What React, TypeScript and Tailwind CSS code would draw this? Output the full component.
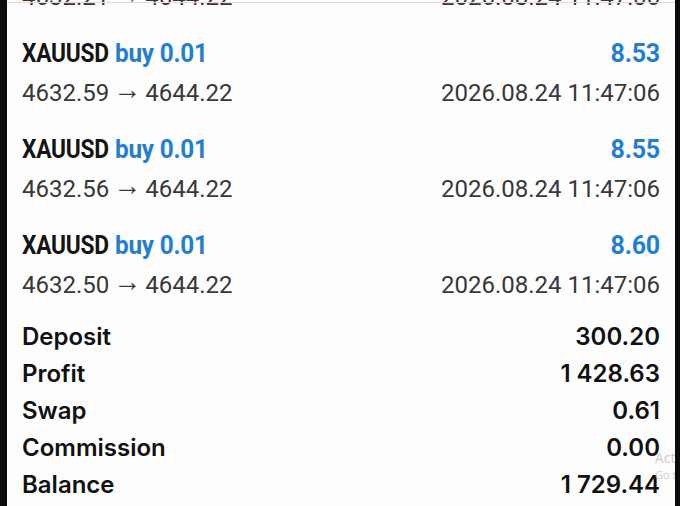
import React from "react";

const trades = [
  { open: "4632.21", close: "4644.22", profit: "8.51", time: "2026.08.24 11:47:06" },
  { open: "4632.59", close: "4644.22", profit: "8.53", time: "2026.08.24 11:47:06" },
  { open: "4632.56", close: "4644.22", profit: "8.55", time: "2026.08.24 11:47:06" },
  { open: "4632.50", close: "4644.22", profit: "8.60", time: "2026.08.24 11:47:06" },
];

const summary = [
  { label: "Deposit", value: "300.20" },
  { label: "Profit", value: "1 428.63" },
  { label: "Swap", value: "0.61" },
  { label: "Commission", value: "0.00" },
  { label: "Balance", value: "1 729.44" },
];

export default function App() {
  return (
    <div className="flex h-[506px] w-[680px] overflow-hidden bg-black">
      <div className="w-[7px] shrink-0 bg-[#0c0c0c]" />

      <div className="relative flex-1 overflow-hidden bg-[#fdfdfd] px-[15px]">
        {/* thin pink edge at the top of the screenshot */}
        <div className="absolute left-0 right-0 top-[2px] h-[1px] bg-[#f2d2d2]" />

        <div className="-mt-[62px]">
          {trades.map((t, i) => (
            <div key={i} className="pb-[18px]">
              <div className="flex h-[40px] items-center justify-between font-['Roboto',sans-serif] text-[25px] font-bold">
                <div className="flex items-baseline">
                  <span className="inline-block origin-left scale-x-[0.91] -mr-[9px] tracking-[-0.3px] text-[#141414]">
                    XAUUSD
                  </span>
                  <span className="ml-[7px] inline-block origin-left scale-x-[0.97] tracking-[-0.2px] text-[#1f7fd1]">
                    buy 0.01
                  </span>
                </div>
                <span className="tracking-[-0.2px] text-[#1f7fd1]">{t.profit}</span>
              </div>
              <div className="flex h-[38px] items-center justify-between font-['Roboto',sans-serif] text-[24px] text-[#383838]">
                <span className="flex items-center">
                  {t.open}
                  <span className="mx-[4px] -translate-y-[3px] font-['Liberation_Sans',sans-serif] text-[28px] leading-none">
                    →
                  </span>
                  {t.close}
                </span>
                <span>{t.time}</span>
              </div>
            </div>
          ))}
        </div>

        <div className="-mt-[4px] font-['Inter',sans-serif] text-[24px] font-semibold text-[#111]">
          {summary.map((s) => (
            <div key={s.label} className="flex h-[37px] items-center justify-between">
              <span>{s.label}</span>
              <span>{s.value}</span>
            </div>
          ))}
        </div>

        {/* faint OS watermark bleeding in at the right edge */}
        <div className="absolute left-[648px] top-[451px] whitespace-nowrap font-['Open_Sans',sans-serif] leading-none text-[#cdcdcd]">
          <div className="text-[14px]">Activate Windows</div>
          <div className="mt-[4px] text-[11px]">Go to Settings</div>
        </div>
      </div>

      <div className="w-[5px] shrink-0 bg-[#0c0c0c]" />
    </div>
  );
}
